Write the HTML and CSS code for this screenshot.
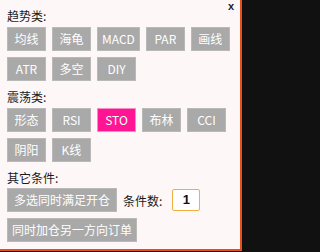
FILE: index.html
```html
<!DOCTYPE html>
<html lang="zh">
<head>
<meta charset="utf-8">
<link rel="stylesheet" href="styles.css">
</head>
<body>
<div class="stage">
  <div class="panel">
    <span class="close">x</span>
    <div class="label">趋势类:</div>
    <div class="btns">
      <span class="btn">均线</span>
      <span class="btn">海龟</span>
      <span class="btn">MACD</span>
      <span class="btn">PAR</span>
      <span class="btn">画线</span>
      <span class="btn">ATR</span>
      <span class="btn">多空</span>
      <span class="btn">DIY</span>
    </div>
    <div class="label">震荡类:</div>
    <div class="btns">
      <span class="btn">形态</span>
      <span class="btn">RSI</span>
      <span class="btn active">STO</span>
      <span class="btn">布林</span>
      <span class="btn">CCI</span>
      <span class="btn">阴阳</span>
      <span class="btn">K线</span>
    </div>
    <div class="label other">其它条件:</div>
    <div class="btns">
      <span class="btn wide">多选同时满足开仓</span>
      <span class="count">条件数:</span>
      <span class="num">1</span>
      <span class="btn">同时加仓另一方向订单</span>
    </div>
  </div>
</div>
</body>
</html>
```

FILE: styles.css
```css
html, body {
  margin: 0;
  padding: 0;
  background: #111;
}
.stage {
  width: 244px;
  height: 252px;
  background: #111;
}
.panel {
  position: relative;
  box-sizing: border-box;
  width: 242px;
  height: 251px;
  background: #fdf8f7;
  border-right: 2px solid #e8501a;
  border-bottom: 2px solid #e8501a;
  padding: 7px 0 0 7px;
  font-family: "Noto Sans CJK SC", "Noto Sans", sans-serif;
  font-size: 12px;
  color: #1a1a1a;
}
.close {
  position: absolute;
  top: 0;
  right: 6px;
  line-height: normal;
  font-family: "Liberation Sans", sans-serif;
  font-size: 11px;
  font-weight: bold;
  color: #222;
}
.label {
  height: 17px;
  line-height: 17px;
  margin-bottom: 3px;
}
.label.other {
  margin-top: 1px;
  margin-bottom: 2px;
}
.btns {
  display: flex;
  flex-wrap: wrap;
  gap: 6px;
  align-items: center;
  margin-bottom: 7px;
  width: 232px;
}
.btn {
  box-sizing: border-box;
  min-width: 39px;
  height: 24px;
  line-height: 22px;
  padding: 0 4px;
  text-align: center;
  background: #a9a9a9;
  border: 1px solid #b9b9b9;
  color: #fff;
  white-space: nowrap;
}
.btn.wide {
  padding: 0 6px;
}
.btn.active {
  background: #ff1493;
  border-color: #f78cc6;
}
.count {
  color: #1a1a1a;
  margin-right: 4px;
}
.num {
  box-sizing: border-box;
  width: 28px;
  height: 22px;
  line-height: 20px;
  text-align: center;
  border: 1px solid #f0b040;
  border-radius: 2px;
  background: #fff;
  font-family: "Liberation Sans", sans-serif;
  font-weight: bold;
  font-size: 13px;
  color: #111;
  margin-right: 30px;
}
```
